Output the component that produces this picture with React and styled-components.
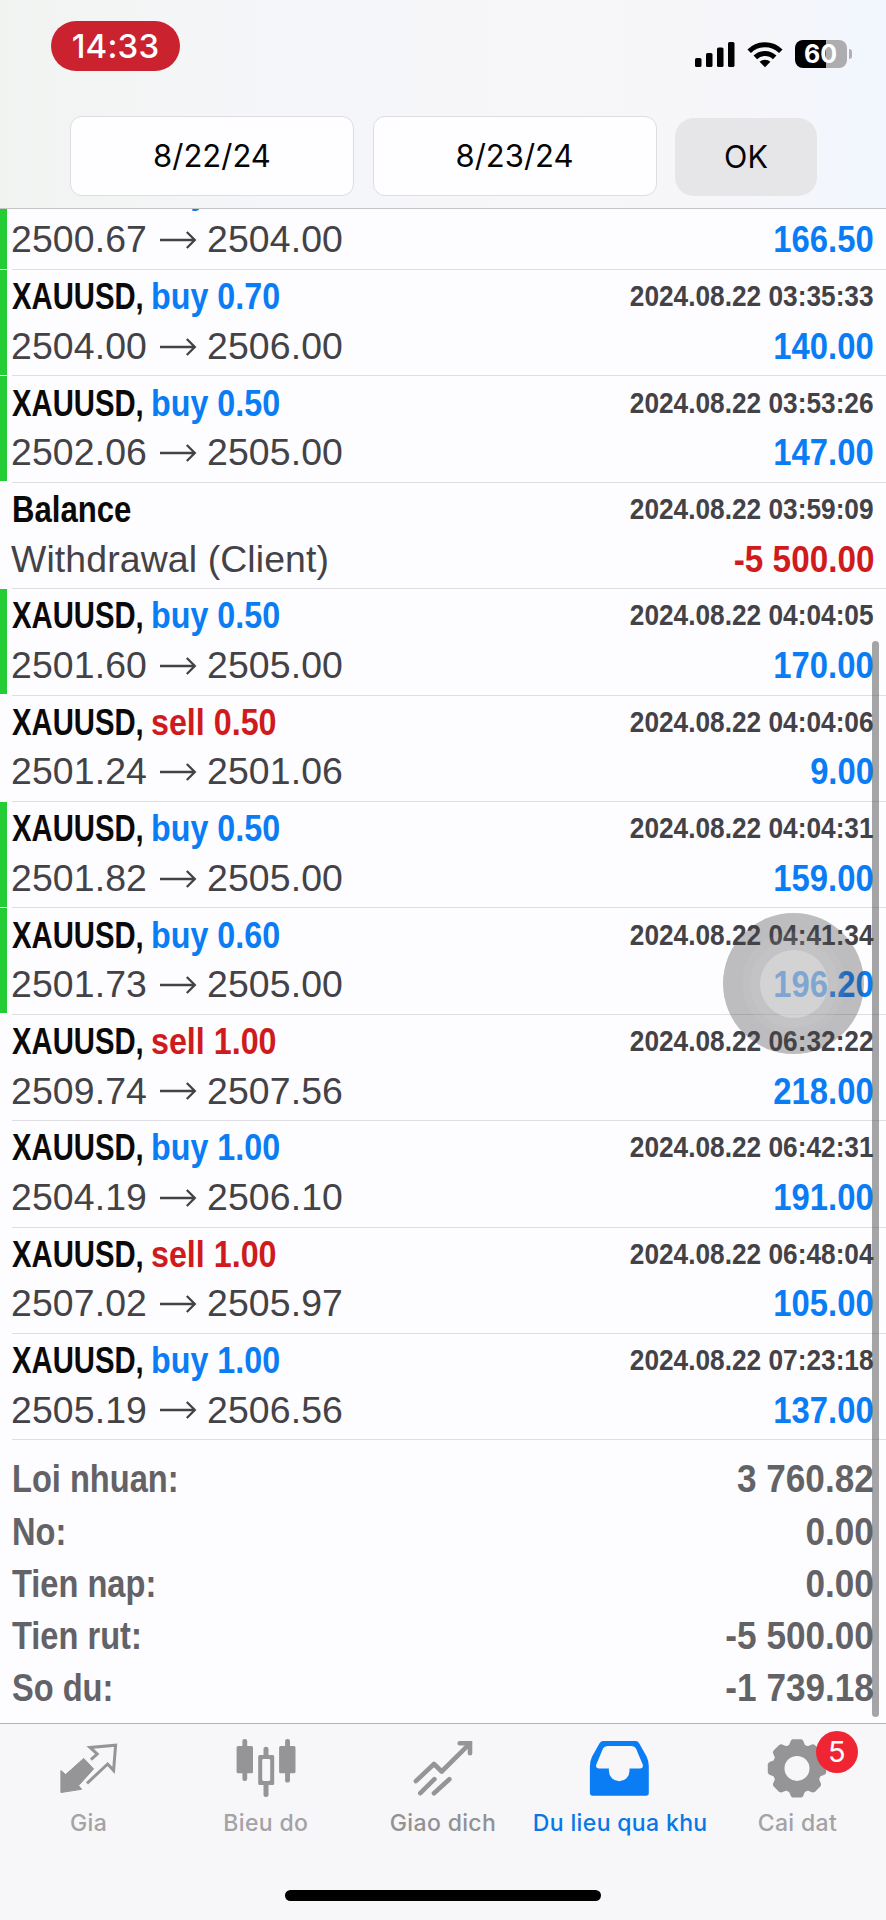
import React from 'react'
import styled, { createGlobalStyle, css } from 'styled-components'

const BLUE = '#0a7df5'
const RED = '#cf1b1d'
const GRAY = '#959497'

const DEALS = [
  { symbol: 'XAUUSD,', side: 'buy', volume: '0.50', from: '2500.67', to: '2504.00', profit: '166.50', marked: true },
  { symbol: 'XAUUSD,', side: 'buy', volume: '0.70', from: '2504.00', to: '2506.00', date: '2024.08.22 03:35:33', profit: '140.00', marked: true },
  { symbol: 'XAUUSD,', side: 'buy', volume: '0.50', from: '2502.06', to: '2505.00', date: '2024.08.22 03:53:26', profit: '147.00', marked: true },
  { symbol: 'Balance', note: 'Withdrawal (Client)', date: '2024.08.22 03:59:09', profit: '-5 500.00' },
  { symbol: 'XAUUSD,', side: 'buy', volume: '0.50', from: '2501.60', to: '2505.00', date: '2024.08.22 04:04:05', profit: '170.00', marked: true },
  { symbol: 'XAUUSD,', side: 'sell', volume: '0.50', from: '2501.24', to: '2501.06', date: '2024.08.22 04:04:06', profit: '9.00' },
  { symbol: 'XAUUSD,', side: 'buy', volume: '0.50', from: '2501.82', to: '2505.00', date: '2024.08.22 04:04:31', profit: '159.00', marked: true },
  { symbol: 'XAUUSD,', side: 'buy', volume: '0.60', from: '2501.73', to: '2505.00', date: '2024.08.22 04:41:34', profit: '196.20', marked: true },
  { symbol: 'XAUUSD,', side: 'sell', volume: '1.00', from: '2509.74', to: '2507.56', date: '2024.08.22 06:32:22', profit: '218.00' },
  { symbol: 'XAUUSD,', side: 'buy', volume: '1.00', from: '2504.19', to: '2506.10', date: '2024.08.22 06:42:31', profit: '191.00' },
  { symbol: 'XAUUSD,', side: 'sell', volume: '1.00', from: '2507.02', to: '2505.97', date: '2024.08.22 06:48:04', profit: '105.00' },
  { symbol: 'XAUUSD,', side: 'buy', volume: '1.00', from: '2505.19', to: '2506.56', date: '2024.08.22 07:23:18', profit: '137.00' },
]

const SUMMARY = [
  ['Loi nhuan:', '3 760.82'],
  ['No:', '0.00'],
  ['Tien nap:', '0.00'],
  ['Tien rut:', '-5 500.00'],
  ['So du:', '-1 739.18'],
]

const gearPath = (cx, cy) => {
  const points = []
  const add = (radius, deg) => {
    const a = (deg * Math.PI) / 180
    points.push(`${(cx + radius * Math.cos(a)).toFixed(2)} ${(cy + radius * Math.sin(a)).toFixed(2)}`)
  }
  for (let i = 0; i < 8; i++) {
    const mid = i * 45
    add(24, mid - 18)
    add(28.2, mid - 11)
    add(28.8, mid - 8)
    add(28.8, mid + 8)
    add(28.2, mid + 11)
    add(24, mid + 18)
  }
  return `M${points.join('L')}Z`
}

const ArrowsIcon = () => (
  <TabSvg viewBox="0 0 64 64">
    <path
      d="M3.9 35.5 8.6 39.6 26.7 23.4 36.6 33.9 21.6 50.6 24.6 54.3 3.9 57.5Z"
      fill="currentColor"
      stroke="currentColor"
      strokeWidth="1"
      strokeLinejoin="round"
    />
    <path d="M33.9 24.7 40.2 19 33 12.4 58.6 10.2 56.6 35.4 50.6 29 30 48.4" fill="none" stroke="currentColor" strokeWidth="3" />
  </TabSvg>
)

const CandlesIcon = () => (
  <TabSvg viewBox="0 0 64 64" fill="currentColor">
    <rect x="2.6" y="11" width="16.4" height="27.2" rx="1.5" />
    <rect x="8.4" y="4" width="4.8" height="42" rx="2.2" />
    <path fillRule="evenodd" d="M25.7 20h13a1.5 1.5 0 0 1 1.5 1.5v27a1.5 1.5 0 0 1-1.5 1.5h-13a1.5 1.5 0 0 1-1.5-1.5v-27a1.5 1.5 0 0 1 1.5-1.5ZM29.6 24q-1.4 0-1.4 1.4v19.2q0 1.4 1.4 1.4h5.2q1.4 0 1.4-1.4V25.4q0-1.4-1.4-1.4Z" />
    <path d="M29.5 21V14.2a2.5 2.5 0 0 1 5 0V21ZM29.5 49V59.6a2.5 2.5 0 0 0 5 0V49Z" />
    <rect x="45.1" y="11" width="16.4" height="27.2" rx="1.5" />
    <rect x="51.1" y="4" width="4.9" height="43.6" rx="2.2" />
  </TabSvg>
)

const TrendIcon = () => (
  <TabSvg viewBox="0 0 64 64" fill="none" stroke="currentColor" strokeWidth="4.6">
    <path d="M4.9 46.1 23 29 30.7 36.5 57.5 9.8" strokeLinecap="round" strokeLinejoin="round" />
    <path d="M48.7 8.3H59V18.3" strokeLinecap="round" />
    <path d="M9.3 58.2 23.4 44.2M23 58.2 38.4 44.2" strokeLinecap="round" />
  </TabSvg>
)

const InboxIcon = () => (
  <TabSvg viewBox="0 0 64 64" fill="currentColor">
    <path
      fillRule="evenodd"
      d="M15.5 6H47.5Q50 6 51.3 8.4L58.6 21.5Q60.8 26 60.8 31V58Q60.8 60.7 58 60.7H4.8Q1.9 60.7 1.9 58V31Q1.9 26 4.1 21.5L11.4 8.4Q12.8 6 15.5 6ZM19.5 11Q16.3 11 15 13.6L8.3 29.5Q7.2 33.4 11 33.4H20.9V36A10.3 10.2 0 0 0 41.5 36V33.4H52Q55.6 33.4 54.7 29.5L48 13.6Q46.8 11 43.5 11Z"
    />
  </TabSvg>
)

const GearIcon = () => (
  <TabSvg viewBox="0 0 64 64">
    <path
      fillRule="evenodd"
      fill="currentColor"
      stroke="currentColor"
      strokeWidth="1.4"
      strokeLinejoin="round"
      d={`${gearPath(32, 33.4)}M45.2 33.4A13.2 13.2 0 1 0 18.8 33.4A13.2 13.2 0 1 0 45.2 33.4Z`}
    />
  </TabSvg>
)

const TABS = [
  { label: 'Gia', Icon: ArrowsIcon },
  { label: 'Bieu do', Icon: CandlesIcon },
  { label: 'Giao dich', Icon: TrendIcon, dark: true },
  { label: 'Du lieu qua khu', Icon: InboxIcon, active: true },
  { label: 'Cai dat', Icon: GearIcon, badge: 5 },
]

const StatusBar = () => (
  <Status>
    <Clock>14:33</Clock>
    <StatusIcons>
      <svg width="41" height="27" viewBox="0 0 41 27">
        <rect x="0" y="17" width="6.5" height="9" rx="1.6" />
        <rect x="11" y="12" width="6.5" height="14" rx="1.6" />
        <rect x="22" y="6.5" width="6.5" height="19.5" rx="1.6" />
        <rect x="33" y="1" width="6.5" height="25" rx="1.6" />
      </svg>
      <WifiSvg width="36" height="27" viewBox="0 0 36 27">
        <g fill="none" stroke="#000" strokeWidth="5">
          <path d="M2.2 10.3A22.4 22.4 0 0 1 33.8 10.3" />
          <path d="M8.3 16.4A13.8 13.8 0 0 1 27.7 16.4" />
        </g>
        <path d="M18 26.2 12.6 20.8A7.8 7.8 0 0 1 23.4 20.8Z" />
      </WifiSvg>
      <Battery>60</Battery>
      <BatteryTip />
    </StatusIcons>
  </Status>
)

const Deal = ({ deal }) => (
  <Row>
    <Marker $on={deal.marked} />
    <RowBody>
      <Line>
        <Title>
          <Symbol $tight={!!deal.side}>{deal.symbol}</Symbol>
          {deal.side && (
            <Side $side={deal.side}>
              {deal.side} {deal.volume}
            </Side>
          )}
        </Title>
        {deal.date && <DateText>{deal.date}</DateText>}
      </Line>
      <Line>
        {deal.note ? (
          <Prices>{deal.note}</Prices>
        ) : (
          <Prices>
            {deal.from}
            <ArrowSvg viewBox="0 0 60 20">
              <path d="M13 10H47.5M39.8 2 47.8 10 39.8 18" />
            </ArrowSvg>
            {deal.to}
          </Prices>
        )}
        <Profit $negative={deal.profit.startsWith('-')}>{deal.profit}</Profit>
      </Line>
    </RowBody>
  </Row>
)

const App = () => (
  <Screen>
    <GlobalStyle />
    <Header>
      <StatusBar />
      <Filter>
        <DateField>8/22/24</DateField>
        <DateField>8/23/24</DateField>
        <OkButton>OK</OkButton>
      </Filter>
    </Header>
    <Content>
      <List>
        {DEALS.map((deal, i) => (
          <Deal key={i} deal={deal} />
        ))}
      </List>
      <Summary>
        {SUMMARY.map(([label, value]) => (
          <SummaryRow key={label}>
            <SummaryLabel>{label}</SummaryLabel>
            <SummaryValue>{value}</SummaryValue>
          </SummaryRow>
        ))}
      </Summary>
      <Scrollbar />
      <TouchButton>
        <TouchRing $size={103}>
          <TouchRing $size={88}>
            <TouchRing $size={68} $core />
          </TouchRing>
        </TouchRing>
      </TouchButton>
    </Content>
    <TabBar>
      <Tabs>
        {TABS.map(({ label, Icon, active, dark, badge }) => (
          <Tab key={label} $active={active}>
            <Icon />
            <TabLabel $active={active} $dark={dark}>
              {label}
            </TabLabel>
            {badge && <Badge>{badge}</Badge>}
          </Tab>
        ))}
      </Tabs>
      <HomeIndicator />
    </TabBar>
  </Screen>
)

const GlobalStyle = createGlobalStyle`
  * {
    box-sizing: border-box;
  }
  body {
    margin: 0;
    background: #fdfcfe;
  }
`

const Screen = styled.div`
  display: flex;
  flex-direction: column;
  width: 886px;
  height: 1920px;
  overflow: hidden;
  background: #fdfcfe;
  font-family: 'Liberation Sans', Arial, sans-serif;
`

const Header = styled.header`
  flex: none;
  height: 209px;
  border-bottom: 1px solid #c4c3c7;
  background: linear-gradient(90deg, #f0f3f0 0%, #f3f5f5 12%, #f5f6fa 35%, #f7f6f9 60%, #f6f6fa 84%, #f2f6fe 100%);
`

const Status = styled.div`
  display: flex;
  justify-content: space-between;
  align-items: flex-start;
  height: 116px;
  padding: 21px 34px 0 51px;
`

const Clock = styled.div`
  width: 129px;
  height: 50px;
  border-radius: 25px;
  background: #ca222e;
  color: #fff;
  font: 500 33px/50px Inter, sans-serif;
  letter-spacing: 0.2px;
  text-align: center;
`

const StatusIcons = styled.div`
  display: flex;
  align-items: center;
  margin-top: 19px;
`

const WifiSvg = styled.svg`
  margin: 0 11.5px 0 11px;
`

const Battery = styled.div`
  width: 52px;
  height: 28px;
  border-radius: 8px;
  background: linear-gradient(90deg, #000 0 60%, #adacaf 60%);
  color: #fff;
  font: 700 25px/29px Inter, sans-serif;
  text-align: center;
`

const BatteryTip = styled.div`
  width: 3px;
  height: 10px;
  margin-left: 2.5px;
  border-radius: 0 3px 3px 0;
  background: #b0afb2;
`

const Filter = styled.div`
  display: flex;
  align-items: flex-start;
  padding-left: 70px;
`

const DateField = styled.div`
  width: 284px;
  height: 80px;
  margin-right: 18.5px;
  border: 1px solid #dddce0;
  border-radius: 12px;
  background: #fefdff;
  color: #050506;
  font: 400 31px/78px Inter, sans-serif;
  text-align: center;
`

const OkButton = styled.button`
  width: 142px;
  height: 78px;
  margin-top: 2px;
  padding: 0;
  border: none;
  border-radius: 19px;
  background: #e6e6e9;
  color: #050506;
  font: 400 30.5px/78px Inter, sans-serif;
`

const Content = styled.main`
  position: relative;
  flex: none;
  height: 1514px;
  overflow: hidden;
`

const List = styled.div`
  margin-top: -45.4px;
`

const Row = styled.div`
  display: flex;
  height: 106.4px;
`

const Marker = styled.div`
  flex: none;
  width: 7px;
  margin: 0 5px 1.5px 0;
  background: ${(props) => (props.$on ? '#24cc36' : 'transparent')};
`

const RowBody = styled.div`
  flex: 1 1;
  padding: 2.2px 12px 0 0;
  border-bottom: 1.5px solid #dfdee2;
`

const Line = styled.div`
  display: flex;
  justify-content: space-between;
  height: 49.6px;
  line-height: 49.6px;
  white-space: nowrap;
`

/* narrow bold face, squeezed from the regular width */
const condensed = css`
  display: inline-block;
  font-weight: 700;
  transform: scaleX(0.875);
`

const Title = styled.div`
  display: flex;
  font-size: 37.5px;
`

const Symbol = styled.span`
  ${condensed}
  width: 141px;
  transform: scaleX(${(props) => (props.$tight ? 0.78 : 0.83)});
  transform-origin: left;
  color: #0a0a0b;
`

const Side = styled.span`
  ${condensed}
  transform: scaleX(0.86);
  transform-origin: left;
  margin-left: -2px;
  color: ${(props) => (props.$side === 'buy' ? BLUE : RED)};
`

const DateText = styled.span`
  ${condensed}
  transform-origin: right;
  line-height: 47px;
  font-size: 30px;
  color: #434247;
`

const Prices = styled.div`
  display: flex;
  align-items: center;
  margin-left: -1px;
  font-size: 37.4px;
  letter-spacing: 0.12px;
  color: #434247;
`

const ArrowSvg = styled.svg`
  width: 60px;
  height: 20px;
  fill: none;
  stroke: #434247;
  stroke-width: 2.3;
`

const Profit = styled.span`
  ${condensed}
  transform: scaleX(${(props) => (props.$negative ? 0.888 : 0.875)});
  transform-origin: right;
  font-size: 37.5px;
  color: ${(props) => (props.$negative ? RED : BLUE)};
`

const Summary = styled.div`
  padding: 12.2px 12px 0;
`

const SummaryRow = styled.div`
  display: flex;
  justify-content: space-between;
  height: 52.1px;
  line-height: 52.1px;
  font-size: 39.5px;
  color: #636266;
`

const SummaryLabel = styled.span`
  ${condensed}
  transform: scaleX(0.825);
  transform-origin: left;
`

const SummaryValue = styled.span`
  ${condensed}
  transform: scaleX(0.89);
  transform-origin: right;
`

const Scrollbar = styled.div`
  position: absolute;
  top: 432px;
  right: 7px;
  width: 7px;
  height: 1076px;
  border-radius: 4px;
  background: rgba(70, 68, 72, 0.48);
`

const TouchButton = styled.div`
  position: absolute;
  top: 704px;
  right: 22px;
  display: flex;
  align-items: center;
  justify-content: center;
  width: 141px;
  height: 141px;
  border-radius: 50%;
  background: rgba(70, 69, 72, 0.35);
`

const TouchRing = styled.div`
  display: flex;
  align-items: center;
  justify-content: center;
  width: ${(props) => props.$size}px;
  height: ${(props) => props.$size}px;
  border-radius: 50%;
  background: rgba(240, 240, 240, ${(props) => (props.$core ? 0.38 : 0.07)});
`

const TabBar = styled.nav`
  flex: 1 1;
  border-top: 1.5px solid #b5b4b8;
  background: #f7f6f9;
`

const Tabs = styled.div`
  display: grid;
  grid-template-columns: repeat(5, 1fr);
  height: 166px;
`

const Tab = styled.div`
  position: relative;
  display: flex;
  flex-direction: column;
  align-items: center;
  padding-top: 11px;
  color: ${(props) => (props.$active ? BLUE : GRAY)};
`

const TabSvg = styled.svg`
  flex: none;
  width: 64px;
  height: 64px;
`

const TabLabel = styled.span`
  margin-top: 7.5px;
  color: ${(props) => (props.$active ? '#0878e6' : props.$dark ? '#929194' : '#a3a2a5')};
  font: 500 23px/32px Inter, sans-serif;
  letter-spacing: 0.35px;
  white-space: nowrap;
`

const Badge = styled.span`
  position: absolute;
  top: 7px;
  left: 107px;
  width: 42px;
  height: 42px;
  border-radius: 50%;
  background: #f02533;
  color: #fff;
  font: 400 29px/42px Inter, sans-serif;
  text-align: center;
`

const HomeIndicator = styled.div`
  width: 316px;
  height: 11px;
  margin: 0 auto;
  border-radius: 6px;
  background: #000;
`

export default App
